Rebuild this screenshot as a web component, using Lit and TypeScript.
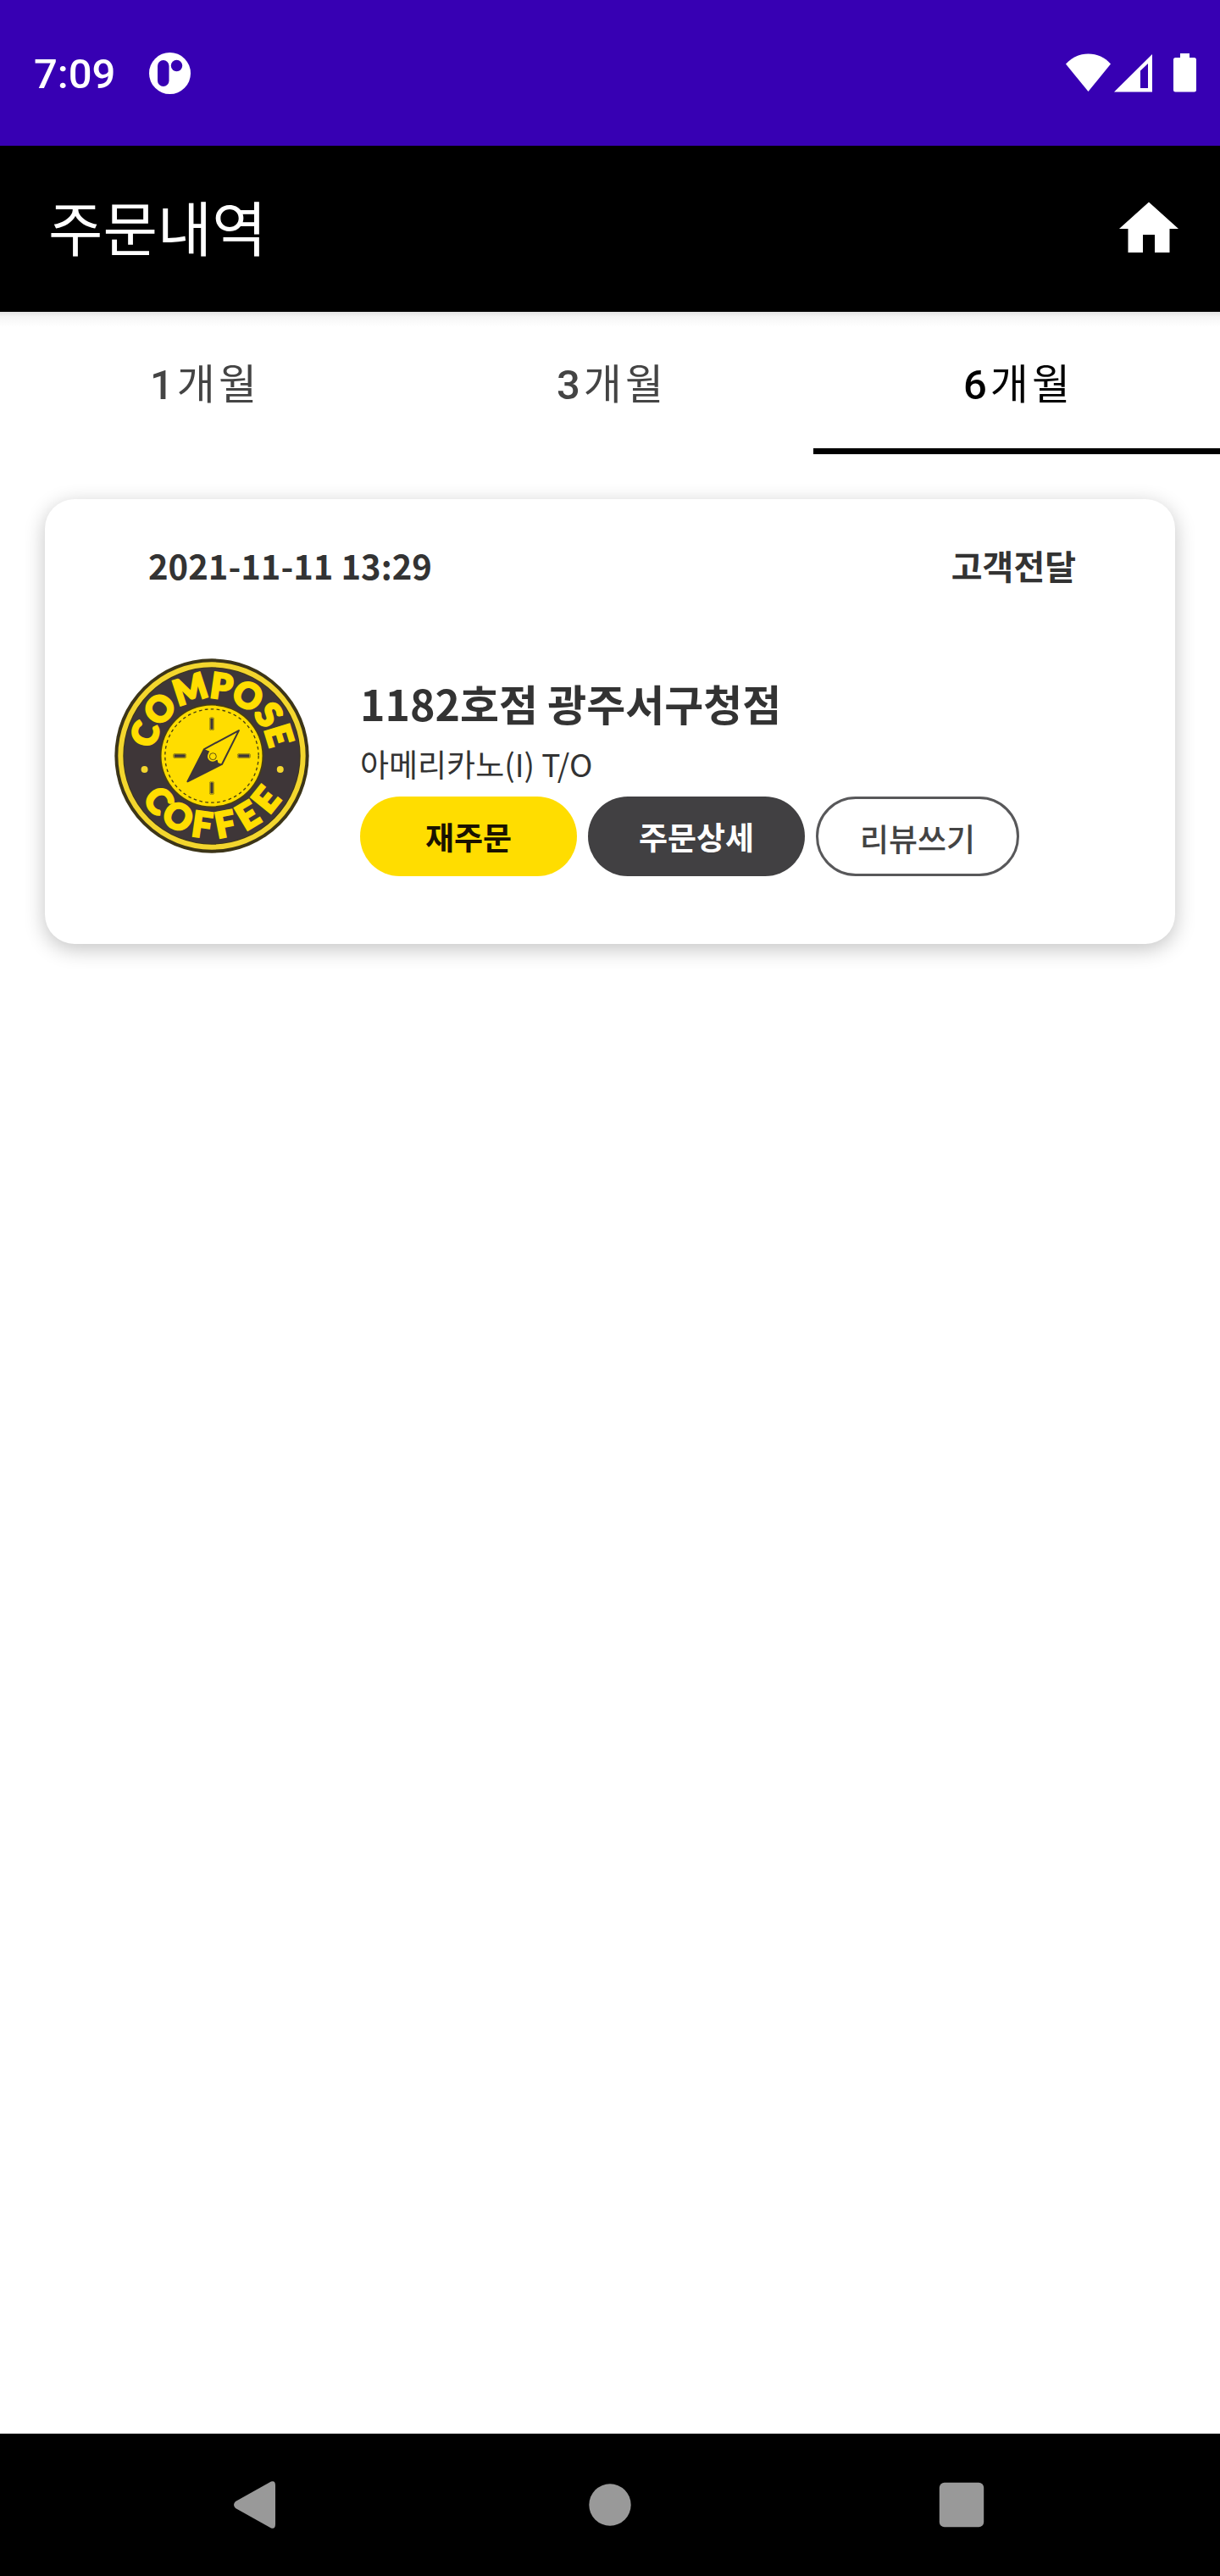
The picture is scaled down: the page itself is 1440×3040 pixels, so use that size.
import { LitElement, html, css, svg } from "lit";
import { customElement, property, state } from "lit/decorators.js";
import { classMap } from "lit/directives/class-map.js";

const reset = css`
  * {
    box-sizing: border-box;
  }
  button {
    margin: 0;
    padding: 0;
    border: 0;
    background: none;
    color: inherit;
    font: inherit;
    cursor: pointer;
  }
  svg {
    display: block;
  }
`;

@customElement("status-bar")
export class StatusBar extends LitElement {
  static styles = [
    reset,
    css`
      :host {
        display: flex;
        align-items: center;
        justify-content: space-between;
        height: 172px;
        padding: 0 28px 0 40px;
        background: #3700b3;
        color: #fff;
        font: 500 49px/56px Roboto, sans-serif;
      }
      .left {
        display: flex;
        align-items: center;
        gap: 40px;
      }
      .time {
        padding-top: 4px;
      }
      .right {
        display: flex;
        align-items: center;
        gap: 25px;
      }
      .network {
        display: flex;
        align-items: center;
        gap: 4px;
      }
    `,
  ];

  render() {
    return html`
      <div class="left">
        <span class="time">7:09</span>
        <svg width="49" height="49" viewBox="0 0 49 49" aria-hidden="true">
          <circle cx="24.5" cy="24.5" r="24.5" fill="#fff" />
          <rect x="10" y="9" width="13.5" height="31" rx="6.75" fill="#3700b3" />
          <circle cx="32.5" cy="15.5" r="6.7" fill="#3700b3" />
        </svg>
      </div>
      <div class="right">
        <div class="network">
          <svg width="53" height="46" viewBox="0 0 53 46" aria-hidden="true">
            <path d="M0 12.5C7 4.500 16 .5 26.500 .5S46 4.500 53 12.500L26.500 45z" fill="#fff" />
          </svg>
          <svg width="45" height="46" viewBox="0 0 45 46" aria-hidden="true">
            <path d="M0 45.500 45 1v44.500zM31 20.500V41h9V12z" fill="#fff" fill-rule="evenodd" />
          </svg>
        </div>
        <svg width="27" height="46" viewBox="0 0 27 46" aria-hidden="true">
          <path
            d="M8 0h11v5h5.500a2.500 2.500 0 0 1 2.500 2.500v35.500a2.500 2.500 0 0 1-2.500 2.500H2.500A2.500 2.500 0 0 1 0 43V7.500A2.500 2.500 0 0 1 2.500 5H8z"
            fill="#fff"
          />
        </svg>
      </div>
    `;
  }
}

@customElement("app-bar")
export class AppBar extends LitElement {
  @property() heading = "";

  static styles = [
    reset,
    css`
      :host {
        display: flex;
        align-items: center;
        justify-content: space-between;
        height: 196px;
        padding: 0 42px 0 57px;
        background: #000;
        color: #fff;
      }
      .heading {
        margin: 0;
        padding-top: 6px;
        font: 400 70px/84px Roboto, "Noto Sans CJK KR", sans-serif;
      }
      .home {
        color: inherit;
      }
    `,
  ];

  render() {
    return html`
      <h1 class="heading">${this.heading}</h1>
      <a class="home" href="#home" aria-label="홈">
        <svg width="84" height="84" viewBox="0 0 24 24" aria-hidden="true">
          <path d="M10 20v-6h4v6h5v-8h3L12 3 2 12h3v8z" fill="currentColor" />
        </svg>
      </a>
    `;
  }
}

@customElement("period-tabs")
export class PeriodTabs extends LitElement {
  @property({ attribute: false }) periods: string[] = [];
  @state() private selected = 2;

  static styles = [
    reset,
    css`
      :host {
        display: block;
      }
      .tabs {
        display: grid;
        grid-template-columns: repeat(3, 1fr);
        background: linear-gradient(#e4e4e4, #f6f6f6 6px, #fff 18px);
      }
      .tab {
        height: 168px;
        border-bottom: 7px solid transparent;
        padding: 12px 0 0 4px;
        color: #444;
        font: 500 49px/56px Roboto, "Noto Sans CJK KR", sans-serif;
        text-align: center;
      }
      .label {
        letter-spacing: 4px;
      }
      .unit {
        font-weight: 400;
      }
      .selected {
        border-bottom-color: #000;
        color: #000;
      }
    `,
  ];

  render() {
    return html`
      <div class="tabs" role="tablist">
        ${this.periods.map(
          (months, i) => html`
            <button
              class=${classMap({ tab: true, selected: i === this.selected })}
              role="tab"
              aria-selected=${i === this.selected}
              @click=${() => (this.selected = i)}
            >
              <span class="label">${months}<span class="unit">개월</span></span>
            </button>
          `,
        )}
      </div>
    `;
  }
}

/** Letters of the badge: [character, degrees away from the vertical]. */
const TOP_LETTERS: [string, number][] = [
  ["C", -72],
  ["O", -48],
  ["M", -18],
  ["P", 8],
  ["O", 31],
  ["S", 54],
  ["E", 73],
];
const BOTTOM_LETTERS: [string, number][] = [
  ["C", 50],
  ["O", 29],
  ["F", 8],
  ["F", -11],
  ["E", -31],
  ["E", -51],
];

@customElement("brand-logo")
export class BrandLogo extends LitElement {
  static styles = [
    reset,
    css`
      :host {
        display: block;
        flex: none;
      }
      .letter {
        font: 900 124px Lato, sans-serif;
        fill: #ffdd00;
        stroke: #ffdd00;
        stroke-width: 8px;
        text-anchor: middle;
      }
    `,
  ];

  render() {
    return html`
      <svg width="230" height="230" viewBox="-346 -346 692 692" role="img" aria-label="COMPOSE COFFEE">
        <circle r="345" fill="#3c3518" />
        <circle r="324" fill="none" stroke="#f3d62e" stroke-width="18" />
        <circle r="312" fill="#3e3638" />
        ${TOP_LETTERS.map(
          ([c, a]) => svg`<text class="letter" y="-205" transform="rotate(${a})">${c}</text>`,
        )}
        ${BOTTOM_LETTERS.map(
          ([c, a]) => svg`<text class="letter" y="291" transform="rotate(${a})">${c}</text>`,
        )}
        <circle cx="-239" cy="48" r="12" fill="#f3d62e" />
        <circle cx="243" cy="48" r="12" fill="#f3d62e" />
        <circle r="184" fill="#4a4010" />
        <circle r="179" fill="#ffdd00" />
        <circle r="166" fill="none" stroke="#4a4010" stroke-width="4" stroke-dasharray="11 10" />
        ${[0, 90, 180, 270].map(
          (a) => svg`
            <g transform="rotate(${a})">
              <rect x="-9" y="-138" width="18" height="48" rx="8" fill="#8b7a10" />
              <rect x="-7" y="-136" width="14" height="44" rx="6" fill="#ffdd00" />
              <rect x="-5" y="-134" width="10" height="40" rx="2" fill="#3e3638" />
            </g>
          `,
        )}
        <path d="M96-90 36 30-86 91-27-24z" fill="#ffdd00" stroke="#3e3638" stroke-width="6" stroke-linejoin="round" />
        <path d="M-27-24-86 91 36 30 22 24 20 14 2 18-14 6-12-10-8-16z" fill="#3e3638" />
        <circle cx="3" cy="2" r="18" fill="#ffdd00" />
        <circle cx="4" cy="2" r="12" fill="none" stroke="#5a4e14" stroke-width="3" />
        <circle cx="4" cy="2" r="6" fill="#ffdd00" />
      </svg>
    `;
  }
}

@customElement("order-card")
export class OrderCard extends LitElement {
  @property() date = "";
  @property() status = "";
  @property() store = "";
  @property() menu = "";

  static styles = [
    reset,
    css`
      :host {
        display: block;
        padding: 48px 0 80px;
        border-radius: 35px;
        background: #fff;
        box-shadow: 0 6px 24px rgba(0, 0, 0, 0.24);
        color: #333;
        font-family: "Noto Sans CJK KR", sans-serif;
      }
      .top {
        display: flex;
        justify-content: space-between;
        padding: 0 117px 0 122px;
        font-size: 40px;
        font-weight: 700;
        line-height: 60px;
      }
      .body {
        display: flex;
        align-items: flex-start;
        gap: 60px;
        margin-top: 80px;
        padding: 0 82px;
      }
      .info {
        padding-top: 16px;
      }
      .store,
      .menu {
        margin: 0;
        line-height: 72px;
      }
      .store {
        font-size: 50px;
        font-weight: 700;
      }
      .menu {
        font-size: 37px;
        font-weight: 400;
      }
      .actions {
        display: flex;
        gap: 13px;
        margin-top: 3px;
      }
      .action {
        width: 256px;
        height: 94px;
        border-radius: 47px;
        font-size: 37px;
        font-weight: 700;
        line-height: 56px;
      }
      .reorder {
        background: #ffdd00;
        color: #1a1200;
      }
      .detail {
        background: #414042;
        color: #fff;
      }
      .review {
        width: 240px;
        padding-top: 4px;
        border: 3px solid #58585a;
        color: #444;
        font-weight: 500;
      }
    `,
  ];

  render() {
    return html`
      <div class="top">
        <time>${this.date}</time>
        <span>${this.status}</span>
      </div>
      <div class="body">
        <brand-logo></brand-logo>
        <div class="info">
          <h2 class="store">${this.store}</h2>
          <p class="menu">${this.menu}</p>
          <div class="actions">
            <button class="action reorder">재주문</button>
            <button class="action detail">주문상세</button>
            <button class="action review">리뷰쓰기</button>
          </div>
        </div>
      </div>
    `;
  }
}

@customElement("nav-bar")
export class NavBar extends LitElement {
  static styles = [
    reset,
    css`
      :host {
        display: grid;
        grid-template-columns: repeat(3, 1fr);
        height: 168px;
        padding: 0 98px;
        background: #000;
        color: #999;
      }
      .key {
        display: flex;
        align-items: center;
        justify-content: center;
      }
    `,
  ];

  render() {
    return html`
      <button class="key" aria-label="뒤로">
        <svg width="58" height="56" viewBox="0 0 58 56" aria-hidden="true">
          <path
            d="M2 24 44 .6Q49-1 49 5V51Q49 57 44 55.400L2 32Q-2 28 2 24z"
            fill="currentColor"
          />
        </svg>
      </button>
      <button class="key" aria-label="홈 화면">
        <svg width="50" height="50" viewBox="0 0 50 50" aria-hidden="true">
          <circle cx="25" cy="25" r="24.700" fill="currentColor" />
        </svg>
      </button>
      <button class="key" aria-label="최근 앱">
        <svg width="54" height="54" viewBox="0 0 54 54" aria-hidden="true">
          <rect x=".8" y=".8" width="52.400" height="52.400" rx="6" fill="currentColor" />
        </svg>
      </button>
    `;
  }
}

@customElement("app-root")
export class AppRoot extends LitElement {
  static styles = [
    reset,
    css`
      :host {
        display: flex;
        flex-direction: column;
        min-height: 100vh;
        background: #fff;
      }
      .orders {
        flex: 1;
        padding: 53px;
      }
    `,
  ];

  render() {
    return html`
      <status-bar></status-bar>
      <app-bar heading="주문내역"></app-bar>
      <period-tabs .periods=${["1", "3", "6"]}></period-tabs>
      <main class="orders">
        <order-card
          date="2021-11-11 13:29"
          status="고객전달"
          store="1182호점 광주서구청점"
          menu="아메리카노(I) T/O"
        ></order-card>
      </main>
      <nav-bar></nav-bar>
    `;
  }
}
